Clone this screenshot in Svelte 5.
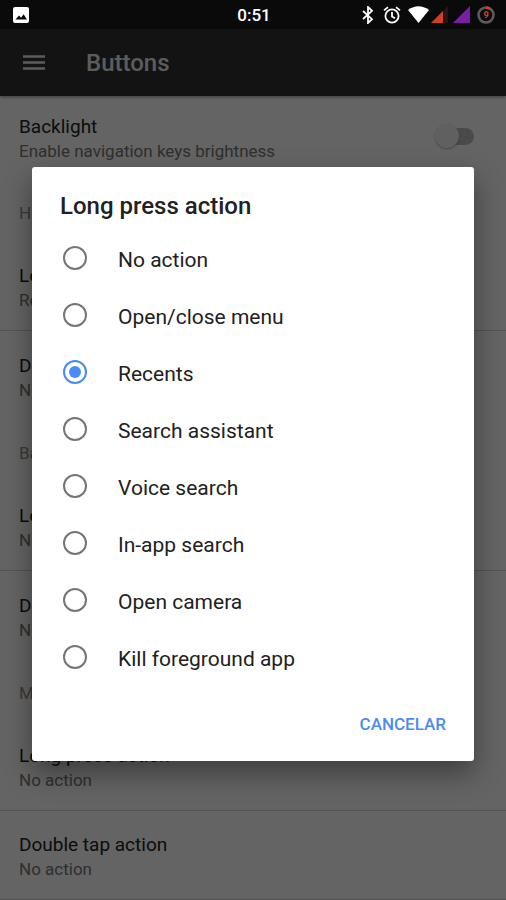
<script>
    let backlight = $state(false);
    let selected = $state('Recents');
    let open = $state(true);

    const actions = [
        'No action',
        'Open/close menu',
        'Recents',
        'Search assistant',
        'Voice search',
        'In-app search',
        'Open camera',
        'Kill foreground app'
    ];

    const groups = [
        { name: 'Home button', longPress: 'Recents', doubleTap: 'No action' },
        { name: 'Back button', longPress: 'No action', doubleTap: 'No action' },
        { name: 'Menu button', longPress: 'No action', doubleTap: 'No action' }
    ];
</script>

<div class="screen">
    <div class="status">
        <svg class="picture" width="16" height="16" viewBox="0 0 16 16" aria-hidden="true">
            <rect width="16" height="16" rx="2" fill="#fff" />
            <path d="M2.5 12.5 6 8.5l2 2.3 2.6-3.6 3.4 5.3z" fill="#0a0a0a" />
        </svg>
        <span class="clock">0:51</span>
        <div class="indicators">
            <svg width="14" height="18" viewBox="0 0 14 18" aria-hidden="true">
                <path d="M2 5l9 8.2L7 17V1l4 3.8L2 13" fill="none" stroke="#fff" stroke-width="1.8" />
            </svg>
            <svg class="alarm" width="18" height="18" viewBox="0 0 18 18" aria-hidden="true">
                <g fill="none" stroke="#fff" stroke-width="1.8">
                    <circle cx="9" cy="10" r="6.6" />
                    <path d="M9 6v4.4l3 1.8M1 4.4l4-3.3M17 4.4l-4-3.3" />
                </g>
            </svg>
            <svg class="wifi" width="21" height="17" viewBox="0 0 21 17" aria-hidden="true">
                <path d="M0 4Q10.5-3.500 21 4L10.5 17z" fill="#fff" />
            </svg>
            <svg class="signal" width="17" height="17" viewBox="0 0 17 17" aria-hidden="true">
                <path d="M17 0v17H0z" fill="#2b1512" />
                <path d="M12 5v12H0z" fill="#d04028" />
            </svg>
            <svg class="signal" width="17" height="17" viewBox="0 0 17 17" aria-hidden="true">
                <path d="M17 0v17H0z" fill="#7b1fa2" />
            </svg>
            <div class="battery">
                <svg width="18" height="18" viewBox="0 0 18 18" aria-hidden="true">
                    <circle cx="9" cy="9" r="7.5" fill="none" stroke="#5c5c5c" stroke-width="2.6" />
                    <path d="M9 1.5A7.5 7.5 0 0 1 13.3 2.9" fill="none" stroke="#e03a26" stroke-width="2.6" />
                </svg>
                <span>9</span>
            </div>
        </div>
    </div>

    <header>
        <button class="menu" aria-label="Menu">
            <svg width="22" height="16" viewBox="0 0 22 16" aria-hidden="true">
                <path d="M0 1.500h22M0 7.500h22M0 13.500h22" stroke="#e6e6e6" stroke-width="2.4" />
            </svg>
        </button>
        <h1>Buttons</h1>
    </header>

    <main>
        <label class="pref backlight">
            <span class="texts">
                <span class="name">Backlight</span>
                <span class="summary">Enable navigation keys brightness</span>
            </span>
            <input class="switch" type="checkbox" role="switch" bind:checked={backlight} />
        </label>

        {#each groups as group}
            <section>
                <h2>{group.name}</h2>
                <button class="pref divided" onclick={() => (open = true)}>
                    <span class="name">Long press action</span>
                    <span class="summary">{group.longPress}</span>
                </button>
                <button class="pref" onclick={() => (open = true)}>
                    <span class="name">Double tap action</span>
                    <span class="summary">{group.doubleTap}</span>
                </button>
            </section>
        {/each}
    </main>

    {#if open}
        <div class="scrim">
            <div class="dialog" role="dialog" aria-modal="true" aria-labelledby="dialog-title">
                <h3 id="dialog-title">Long press action</h3>
                <div class="options" role="radiogroup" aria-labelledby="dialog-title">
                    {#each actions as action}
                        <label class="option">
                            <input type="radio" name="action" value={action} bind:group={selected} />
                            <span>{action}</span>
                        </label>
                    {/each}
                </div>
                <div class="buttons">
                    <button class="cancel" onclick={() => (open = false)}>CANCELAR</button>
                </div>
            </div>
        </div>
    {/if}
</div>

<style>
    :global(body) {
        margin: 0;
        background: #fafafa;
    }

    .screen {
        position: relative;
        height: 100vh;
        overflow: hidden;
        display: flex;
        flex-direction: column;
        font-family: Roboto, "Noto Sans", sans-serif;
        background: #fafafa;
    }

    button {
        border: 0;
        padding: 0;
        background: none;
        font: inherit;
        color: inherit;
        text-align: left;
    }

    h1, h2, h3 {
        margin: 0;
        font-weight: 500;
    }

    svg {
        display: block;
    }

    /* the status bar stays bright above the scrim */
    .status {
        position: relative;
        z-index: 2;
        flex: none;
        display: grid;
        grid-template-columns: 1fr auto 1fr;
        align-items: center;
        height: 29px;
        padding: 0 11px 0 13px;
        box-sizing: border-box;
        background: #0a0a0a;
        color: #fff;
    }

    .clock {
        font-size: 17px;
        font-weight: 500;
        line-height: 20px;
    }

    .indicators {
        display: flex;
        justify-content: flex-end;
        align-items: center;
    }

    .alarm {
        margin: 0 7px 0 8px;
    }

    .signal {
        margin-left: 2px;
    }

    .signal + .signal {
        margin-left: 5px;
    }

    .battery {
        display: grid;
        place-items: center;
        margin-left: 7px;
    }

    .battery > * {
        grid-area: 1 / 1;
    }

    .battery span {
        color: #e03a26;
        font-size: 9px;
        font-weight: 700;
        line-height: 10px;
    }

    header {
        flex: none;
        display: flex;
        align-items: center;
        gap: 41px;
        height: 67px;
        padding: 0 23px;
        box-sizing: border-box;
        background: #303030;
        color: #e6e6e6;
        box-shadow: 0 1px 3px rgba(0, 0, 0, 0.4);
    }

    h1 {
        font-size: 24px;
        line-height: 32px;
    }

    .pref {
        display: flex;
        flex-direction: column;
        justify-content: center;
        width: 100%;
        height: 89px;
        padding: 3px 32px 0 19px;
        box-sizing: border-box;
    }

    .backlight {
        flex-direction: row;
        align-items: center;
        justify-content: space-between;
        height: 84px;
        padding-top: 0;
    }

    .divided {
        height: 90px;
        border-bottom: 1px solid #d0d0d0;
    }

    section:last-child .pref:last-child {
        border-bottom: 1px solid #d0d0d0;
    }

    .name,
    .summary {
        display: block;
    }

    .name {
        font-size: 19px;
        line-height: 25px;
        color: #212121;
    }

    .summary {
        font-size: 17px;
        line-height: 24px;
        color: #757575;
    }

    h2 {
        height: 61px;
        padding: 0 19px;
        font-size: 17px;
        font-weight: 400;
        line-height: 66px;
        color: #8f8f8f;
    }

    .switch {
        appearance: none;
        display: flex;
        align-items: center;
        width: 36px;
        height: 17px;
        margin: 0 0 4px;
        border-radius: 9px;
        background: #bababa;
    }

    .switch::before {
        content: "";
        flex: none;
        width: 24px;
        height: 24px;
        margin-left: -3px;
        border-radius: 50%;
        background: #f1f1f1;
        box-shadow: 0 1px 2px rgba(0, 0, 0, 0.3);
    }

    .switch:checked {
        justify-content: flex-end;
        background: #a0c3ff;
    }

    .scrim {
        position: absolute;
        inset: 29px 0 0;
        z-index: 1;
        display: flex;
        align-items: center;
        justify-content: center;
        padding: 0 32px 2px;
        background: rgba(0, 0, 0, 0.6);
    }

    .dialog {
        flex: 1;
        box-sizing: border-box;
        padding: 23px 0 15px;
        border-radius: 3px;
        background: #fff;
        box-shadow: 0 12px 28px rgba(0, 0, 0, 0.4);
    }

    h3 {
        padding: 0 28px 8px;
        font-size: 24px;
        line-height: 32px;
        color: #212121;
    }

    .option {
        display: flex;
        align-items: center;
        gap: 31px;
        height: 57px;
        padding: 0 31px;
        font-size: 21px;
        line-height: 28px;
        color: #212121;
    }

    .option span {
        padding-top: 3px;
    }

    .option input {
        appearance: none;
        flex: none;
        display: grid;
        place-items: center;
        width: 24px;
        height: 24px;
        margin: 0;
        box-sizing: border-box;
        border: 2px solid #757575;
        border-radius: 50%;
    }

    .option input:checked {
        border-color: #4b8bf4;
    }

    .option input:checked::before {
        content: "";
        width: 12px;
        height: 12px;
        border-radius: 50%;
        background: #4b8bf4;
    }

    .buttons {
        display: flex;
        justify-content: flex-end;
        padding: 16px 20px 0;
    }

    .cancel {
        padding: 0 8px;
        font-size: 17px;
        font-weight: 500;
        line-height: 44px;
        color: #4b8bf4;
    }
</style>
